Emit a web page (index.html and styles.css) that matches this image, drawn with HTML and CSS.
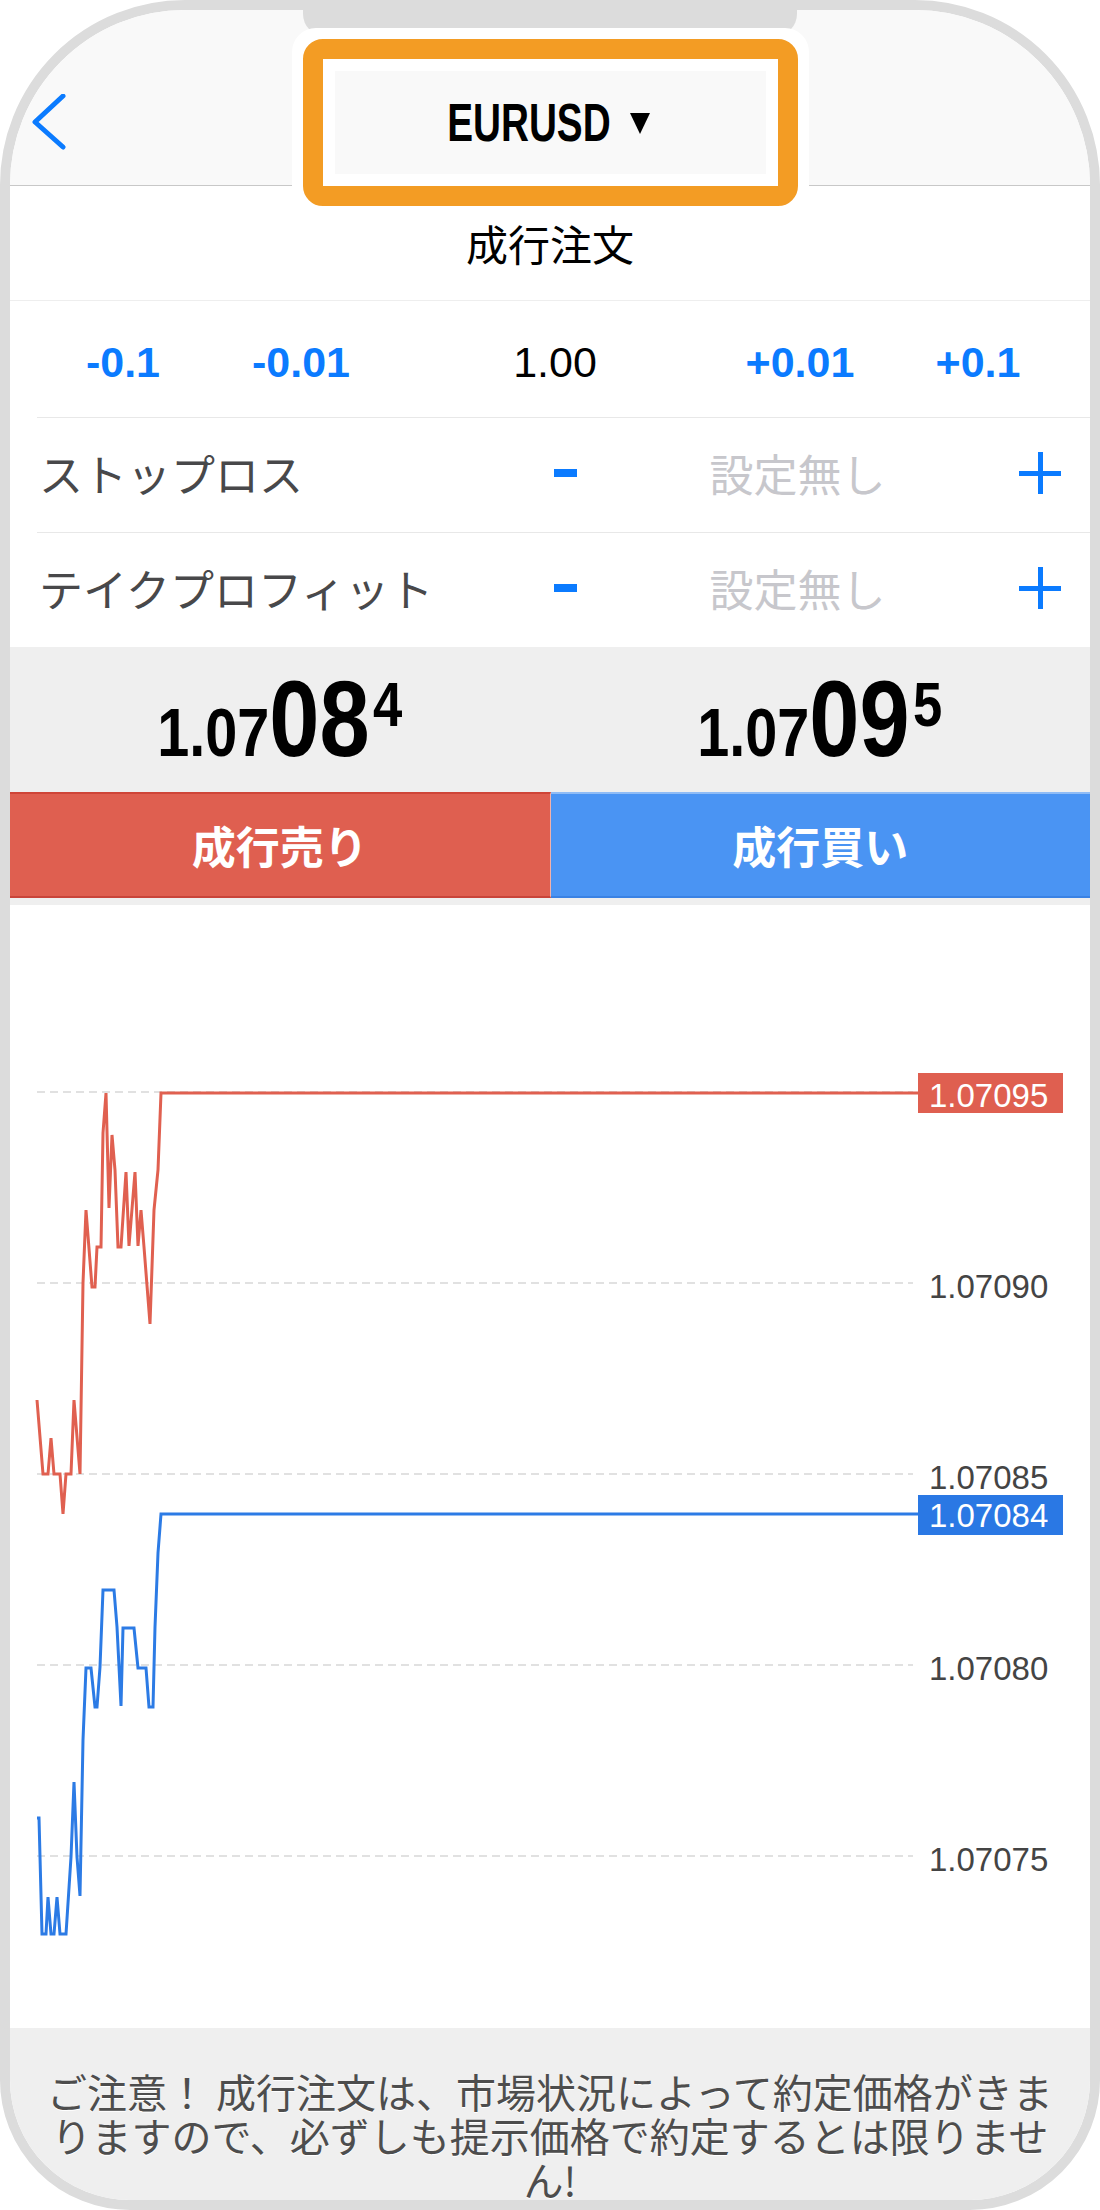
FILE: index.html
```html
<!DOCTYPE html>
<html lang="ja">
<head>
<meta charset="utf-8">
<title>成行注文</title>
<link rel="stylesheet" href="styles.css">
</head>
<body>
<div class="phone">
  <div class="notch"></div>
  <header class="nav">
    <svg class="back" width="36" height="56" viewBox="0 0 36 56"><polyline points="32,2 4,28 32,53" fill="none" stroke="#0b7bff" stroke-width="5" stroke-linecap="round" stroke-linejoin="round"/></svg>
  </header>
  <div class="highlight">
    <div class="hl-orange">
      <div class="hl-inner">
        <span class="symbol">EURUSD</span>
        <svg class="caret" width="20" height="21" viewBox="0 0 20 21"><polygon points="0,0 20,0 10,21" fill="#000"/></svg>
      </div>
    </div>
  </div>
  <div class="title-row">成行注文</div>
  <div class="params">
    <div class="lots-row">
      <span class="step">-0.1</span>
      <span class="step">-0.01</span>
      <span class="volume">1.00</span>
      <span class="step">+0.01</span>
      <span class="step">+0.1</span>
    </div>
    <div class="level-row">
      <span class="level-label">ストップロス</span>
      <span class="minus"></span>
      <span class="level-value">設定無し</span>
      <span class="plus"></span>
    </div>
    <div class="level-row last">
      <span class="level-label">テイクプロフィット</span>
      <span class="minus"></span>
      <span class="level-value">設定無し</span>
      <span class="plus"></span>
    </div>
  </div>
  <div class="trade">
    <div class="quotes">
      <div class="quote"><span class="q-group"><span class="q-small">1.07</span><span class="q-big">08</span><span class="q-sup">4</span></span></div>
      <div class="quote"><span class="q-group"><span class="q-small">1.07</span><span class="q-big">09</span><span class="q-sup">5</span></span></div>
    </div>
    <div class="buttons">
      <div class="btn sell">成行売り</div>
      <div class="btn buy">成行買い</div>
    </div>
  </div>
  <div class="chart">
    <svg width="1080" height="1123" viewBox="10 905 1080 1123">
      <g stroke="#d8d8d8" stroke-width="1.5" stroke-dasharray="8 5">
        <line x1="37" y1="1092" x2="913" y2="1092"/>
        <line x1="37" y1="1283" x2="913" y2="1283"/>
        <line x1="37" y1="1474" x2="913" y2="1474"/>
        <line x1="37" y1="1665" x2="913" y2="1665"/>
        <line x1="37" y1="1856" x2="913" y2="1856"/>
      </g>
      <g class="axis" fill="#444">
        <text x="929" y="1298">1.07090</text>
        <text x="929" y="1489">1.07085</text>
        <text x="929" y="1680">1.07080</text>
        <text x="929" y="1871">1.07075</text>
      </g>
      <polyline fill="none" stroke="#e06050" stroke-width="3" points="37,1400 43,1474 48,1474 51,1438 54,1474 60,1474 63,1514 66,1474 71,1474 74,1400 80,1474 83,1283 86,1210 92,1287 95,1287 97,1247 101,1247 103,1133 106,1093 109,1208 112,1135 115,1170 118,1247 121,1247 126,1172 129,1246 135,1172 138,1246 141,1210 144,1247 150,1324 154,1210 158,1170 161,1093 918,1093"/>
      <polyline fill="none" stroke="#2c7be5" stroke-width="3" points="37,1818 39,1818 42,1934 46,1934 48,1897 51,1934 54,1934 57,1897 60,1934 66,1934 71,1857 74,1782 77,1857 80,1896 83,1740 86,1668 91,1668 95,1707 97,1707 100,1667 103,1590 114,1590 117,1627 121,1706 123,1628 134,1628 138,1668 146,1668 149,1707 153,1707 155,1627 158,1553 161,1514 918,1514"/>
      <rect x="918" y="1073" width="145" height="40" fill="#df5f50"/>
      <text class="axis" x="929" y="1107" fill="#fff">1.07095</text>
      <rect x="918" y="1495" width="145" height="40" fill="#2a78e4"/>
      <text class="axis" x="929" y="1527" fill="#fff">1.07084</text>
    </svg>
  </div>
  <footer class="notice">ご注意！ 成行注文は、市場状況によって約定価格がきまりますので、必ずしも提示価格で約定するとは限りません!</footer>
</div>
</body>
</html>
```
FILE: styles.css
```css
html, body {
  margin: 0;
  padding: 0;
  background: #fff;
}
body {
  font-family: "Liberation Sans", "Noto Sans CJK JP", sans-serif;
}
.phone {
  position: relative;
  width: 1100px;
  height: 2210px;
  box-sizing: border-box;
  border: 10px solid #dcdcdc;
  border-radius: 185px 185px 130px 130px;
  overflow: hidden;
  background: #fff;
}
.notch {
  position: absolute;
  left: 293px;
  top: 0;
  width: 494px;
  height: 26px;
  background: #dcdcdc;
  border-radius: 0 0 22px 22px;
}
.nav {
  height: 176px;
  box-sizing: border-box;
  background: #f9f9f9;
  border-bottom: 1px solid #c8c8c8;
  padding: 84px 0 0 21px;
}
.back {
  display: block;
}
.highlight {
  position: absolute;
  left: 282px;
  top: 18px;
  width: 517px;
  height: 189px;
  box-sizing: border-box;
  padding: 11px;
  background: #fff;
  border-radius: 24px;
}
.hl-orange {
  height: 100%;
  box-sizing: border-box;
  border: 20px solid #f39c24;
  border-radius: 20px;
  background: #fff;
  padding: 12px;
}
.hl-inner {
  height: 100%;
  background: #f9f9f9;
  display: flex;
  align-items: center;
  justify-content: center;
  gap: 19px;
  padding-right: 4px;
}
.symbol {
  display: inline-block;
  font-weight: 700;
  font-size: 53px;
  color: #000;
  line-height: 1;
  transform: scaleX(0.73);
  margin: 0 -30px;
}
.caret {
  display: block;
  margin-top: 2px;
}
.title-row {
  height: 115px;
  box-sizing: border-box;
  border-bottom: 1px solid #eeeeee;
  display: flex;
  align-items: center;
  justify-content: center;
  font-family: "Noto Sans CJK JP", sans-serif;
  font-size: 42px;
  color: #000;
  padding-bottom: 2px;
}
.params {
  padding-left: 27px;
}
.lots-row {
  height: 117px;
  box-sizing: border-box;
  border-bottom: 1px solid #e8e8e8;
  display: grid;
  grid-template-columns: 172px 184px 324px 166px 190px;
  align-items: center;
  justify-items: center;
  padding-top: 6px;
  font-size: 43px;
}
.step {
  color: #0b7bff;
  font-weight: 700;
}
.volume {
  color: #000;
}
.level-row {
  height: 115px;
  box-sizing: border-box;
  border-bottom: 1px solid #e8e8e8;
  display: grid;
  grid-template-columns: 1fr 60px 405px 80px;
  align-items: center;
  justify-items: center;
  padding-right: 10px;
  padding-bottom: 4px;
  font-family: "Noto Sans CJK JP", sans-serif;
  font-size: 44px;
}
.level-row.last {
  height: 114px;
  border-bottom: none;
}
.level-label {
  justify-self: start;
  color: #48484a;
  padding-left: 2px;
}
.level-value {
  color: #c7c7cc;
}
.minus {
  width: 23px;
  height: 8px;
  background: #0b7bff;
}
.plus {
  width: 42px;
  height: 42px;
  background:
    linear-gradient(#0b7bff, #0b7bff) center / 42px 5px no-repeat,
    linear-gradient(#0b7bff, #0b7bff) center / 5px 42px no-repeat;
}
.trade {
  background: #efefef;
  padding-bottom: 7px;
}
.quotes {
  height: 145px;
  display: flex;
}
.quote {
  flex: 1;
  text-align: center;
  line-height: 145px;
  font-weight: 700;
  font-size: 105px;
  color: #000;
  white-space: nowrap;
}
.q-group {
  display: inline-block;
  transform: scaleX(0.835);
}
.q-group span {
  line-height: 1;
}
.q-small {
  font-size: 69px;
}
.q-big {
  font-size: 108px;
}
.q-sup {
  font-size: 63px;
  vertical-align: 30px;
  margin-left: 4px;
}
.buttons {
  height: 106px;
  display: flex;
}
.btn {
  flex: 1;
  display: flex;
  align-items: center;
  justify-content: center;
  box-sizing: border-box;
  color: #fff;
  font-family: "Noto Sans CJK JP", sans-serif;
  font-weight: 700;
  font-size: 44px;
}
.sell {
  background: #df5f50;
  border-top: 2px solid #cf4538;
  border-bottom: 2px solid #c9443a;
  border-right: 1px solid #f2b1a9;
}
.buy {
  background: #4a94f3;
  border-top: 2px solid #8fbcf6;
  border-bottom: 2px solid #3a82e4;
}
.chart {
  height: 1123px;
  background: #fff;
}
.chart svg {
  display: block;
}
.axis {
  font-family: "Liberation Sans", sans-serif;
  font-size: 33px;
}
.notice {
  height: 172px;
  box-sizing: border-box;
  overflow: hidden;
  background: #efefef;
  padding: 41px 32px 0;
  text-align: center;
  font-family: "Noto Sans CJK JP", sans-serif;
  font-size: 40px;
  line-height: 44px;
  color: #4d4d4d;
  text-shadow: 0 1px 0 #fff;
}
```
